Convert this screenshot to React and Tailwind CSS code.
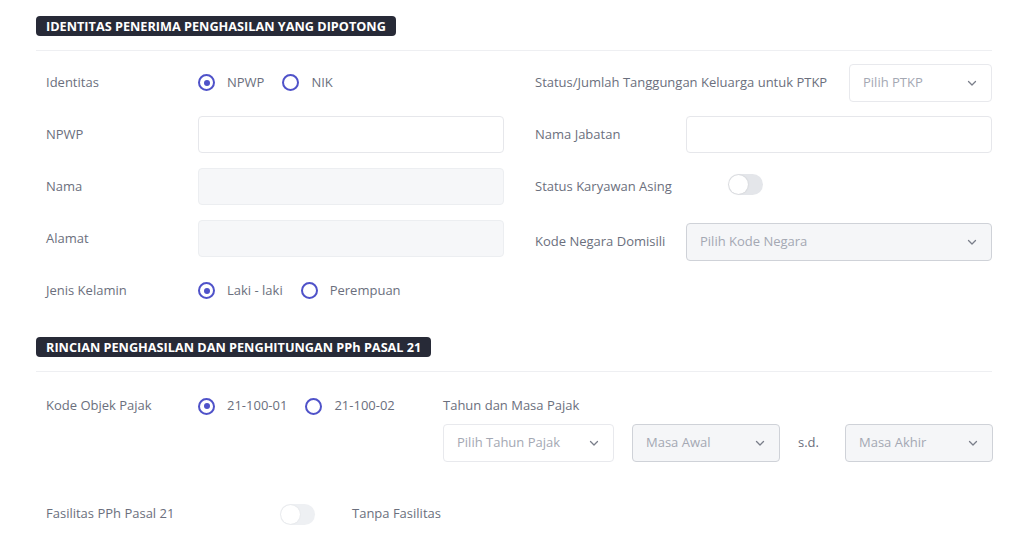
import React from "react";

const Radio = ({ checked, label, gap = "mr-[18px]" }) => (
  <div className={`flex items-center ${gap}`}>
    <span className="w-[17px] h-[17px] rounded-full border-2 border-[#4f52c9] flex items-center justify-center mr-[12px]">
      {checked && <span className="w-[6px] h-[6px] rounded-full bg-[#4f52c9]" />}
    </span>
    <span className="text-[13px] text-[#6b6f7d]">{label}</span>
  </div>
);

const Chevron = () => (
  <svg width="12" height="12" viewBox="0 0 12 12" fill="none" stroke="#7a7e8a" strokeWidth="1.3" strokeLinecap="round" strokeLinejoin="round">
    <path d="M2.5 4.5 L6 8 L9.5 4.5" />
  </svg>
);

const Select = ({ text, gray, className = "" }) => (
  <div
    className={`h-[38px] shrink-0 rounded-[4px] border flex items-center justify-between pl-[13px] pr-[13px] ${
      gray ? "bg-[#f5f6f8] border-[#cfd2d8]" : "bg-white border-[#e8e9ed]"
    } ${className}`}
  >
    <span className="text-[13px] text-[#a4a8b3]">{text}</span>
    <Chevron />
  </div>
);

const Input = ({ disabled, className = "" }) => (
  <div
    className={`h-[37px] rounded-[4px] border ${
      disabled ? "bg-[#f6f7f9] border-[#eceef1]" : "bg-white border-[#e6e7eb]"
    } ${className}`}
  />
);

const Toggle = ({ light }) => (
  <div
    className={`w-[35px] h-[21px] rounded-full relative ${
      light ? "bg-[#eef0f3]" : "bg-[#e4e6ea]"
    }`}
  >
    <span
      className={`absolute left-[1px] top-[1px] w-[19px] h-[19px] rounded-full bg-white ${
        light ? "shadow-[0_0_2px_rgba(0,0,0,0.08)]" : "shadow-[0_0_2px_rgba(0,0,0,0.15)]"
      }`}
    />
  </div>
);

const Label = ({ children, w }) => (
  <div className={`text-[13px] text-[#6b6f7d] shrink-0 ${w}`}>{children}</div>
);

const Header = ({ children }) => (
  <div>
    <div className="w-fit bg-[#272a37] rounded-[4px] h-[20px] px-[10px] leading-[20px] text-white text-[12.7px] font-bold">
      {children}
    </div>
    <div className="h-px bg-[#eeeff2] mt-[14px]" />
  </div>
);

export default function App() {
  return (
    <div
      className="w-[1024px] h-[542px] bg-white overflow-hidden pl-[36px] pr-[32px] pt-[16px]"
      style={{ fontFamily: '"Open Sans", "Noto Sans", sans-serif' }}
    >
      <Header>IDENTITAS PENERIMA PENGHASILAN YANG DIPOTONG</Header>

      <div className="flex mt-[13px]">
        {/* left column */}
        <div className="w-[468px] flex flex-col gap-[15px] pl-[10px]">
          <div className="h-[37px] flex items-center">
            <Label w="w-[152px]">Identitas</Label>
            <Radio checked label="NPWP" />
            <Radio label="NIK" />
          </div>
          <div className="h-[37px] flex items-center">
            <Label w="w-[152px]">NPWP</Label>
            <Input className="flex-1" />
          </div>
          <div className="h-[37px] flex items-center">
            <Label w="w-[152px]">Nama</Label>
            <Input disabled className="flex-1" />
          </div>
          <div className="h-[37px] flex items-center">
            <Label w="w-[152px]">Alamat</Label>
            <Input disabled className="flex-1" />
          </div>
          <div className="h-[37px] flex items-center">
            <Label w="w-[152px]">Jenis Kelamin</Label>
            <Radio checked label="Laki - laki" />
            <Radio label="Perempuan" />
          </div>
        </div>

        {/* right column */}
        <div className="ml-[31px] flex-1 flex flex-col gap-[15px]">
          <div className="h-[37px] flex items-center justify-between">
            <Label w="">Status/Jumlah Tanggungan Keluarga untuk PTKP</Label>
            <Select text="Pilih PTKP" className="w-[143px]" />
          </div>
          <div className="h-[37px] flex items-center">
            <Label w="w-[151px]">Nama Jabatan</Label>
            <Input className="flex-1" />
          </div>
          <div className="h-[37px] flex items-center">
            <Label w="w-[193px]">Status Karyawan Asing</Label>
            <div className="-mt-[5px]">
              <Toggle />
            </div>
          </div>
          <div className="h-[37px] flex items-center mt-[3px]">
            <Label w="w-[151px]">Kode Negara Domisili</Label>
            <Select gray text="Pilih Kode Negara" className="flex-1" />
          </div>
        </div>
      </div>

      <div className="mt-[28px]">
        <Header>RINCIAN PENGHASILAN DAN PENGHITUNGAN PPh PASAL 21</Header>
      </div>

      <div className="flex mt-[24px]">
        <div className="pl-[10px] flex items-start w-[407px] shrink-0">
          <div className="h-[20px] flex items-center">
            <Label w="w-[152px]">Kode Objek Pajak</Label>
            <Radio checked label="21-100-01" />
            <Radio label="21-100-02" />
          </div>
        </div>
        <div className="shrink-0">
          <div className="h-[20px] flex items-center text-[13px] text-[#6b6f7d]">Tahun dan Masa Pajak</div>
          <div className="flex items-center mt-[8px]">
            <Select text="Pilih Tahun Pajak" className="w-[171px]" />
            <Select gray text="Masa Awal" className="w-[148px] ml-[18px]" />
            <span className="text-[13px] text-[#6b6f7d] ml-[18px] w-[47px] shrink-0">s.d.</span>
            <Select gray text="Masa Akhir" className="w-[148px]" />
          </div>
        </div>
      </div>

      <div className="flex items-center pl-[10px] mt-[41px] h-[22px]">
        <Label w="w-[234px]">Fasilitas PPh Pasal 21</Label>
        <Toggle light />
        <span className="ml-[37px] text-[13px] text-[#6b6f7d]">Tanpa Fasilitas</span>
      </div>
    </div>
  );
}
